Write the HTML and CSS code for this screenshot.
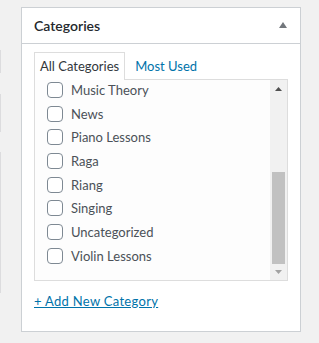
FILE: index.html
```html
<!DOCTYPE html>
<html>
<head>
<meta charset="utf-8">
<link rel="stylesheet" href="styles.css">
</head>
<body>
<div class="edge">
  <div class="seg seg1"></div>
  <div class="seg seg2"></div>
  <div class="seg seg3"></div>
</div>

<div class="postbox">
  <div class="hndle">
    <h2>Categories</h2>
    <svg class="toggle" width="8" height="6" viewBox="0 0 8 6"><polygon points="4,0 8,6 0,6" fill="#72777c"/></svg>
  </div>
  <div class="inside">
    <div class="tabs">
      <div class="tab active">All Categories</div>
      <div class="tab">Most Used</div>
    </div>
    <div class="panel">
      <div class="checklist">
        <label class="row"><span class="box"></span>Music Theory</label>
        <label class="row"><span class="box"></span>News</label>
        <label class="row"><span class="box"></span>Piano Lessons</label>
        <label class="row"><span class="box"></span>Raga</label>
        <label class="row"><span class="box"></span>Riang</label>
        <label class="row"><span class="box"></span>Singing</label>
        <label class="row"><span class="box"></span>Uncategorized</label>
        <label class="row"><span class="box"></span>Violin Lessons</label>
      </div>
      <div class="scrollbar">
        <div class="sbtn"><svg width="7" height="4" viewBox="0 0 7 4"><polygon points="3.5,0 7,4 0,4" fill="#505050"/></svg></div>
        <div class="track"><div class="thumb"></div></div>
        <div class="sbtn down"><svg width="7" height="4" viewBox="0 0 7 4"><polygon points="0,0 7,0 3.5,4" fill="#a3a3a3"/></svg></div>
      </div>
    </div>
    <a class="add" href="#">+ Add New Category</a>
  </div>
</div>
</body>
</html>
```
FILE: styles.css
```css
body {
  margin: 0;
  padding-top: 7px;
  background: #f1f1f1;
  display: flex;
  align-items: flex-start;
  font-family: Lato, "Liberation Sans", sans-serif;
  font-size: 13px;
  color: #444;
}

.edge {
  width: 2px;
  display: flex;
  flex-direction: column;
}

.seg {
  width: 1px;
  background: #dcdcde;
}
.seg1 { margin-top: 43px; height: 23px; }
.seg2 { margin-top: 21px; height: 38px; }
.seg3 { margin-top: 20px; height: 141px; }

.postbox {
  margin-left: 19px;
  width: 280px;
  height: 325px;
  box-sizing: border-box;
  background: #fff;
  border: 1px solid #ccd0d4;
}

.hndle {
  height: 35px;
  border-bottom: 1px solid #ccd0d4;
  display: flex;
  align-items: center;
  justify-content: space-between;
  padding: 0 13px 0 12px;
}

.hndle h2 {
  margin: 0;
  font-size: 14px;
  font-weight: 600;
  color: #23282d;
}

.toggle {
  margin-top: -1px;
}

.inside {
  padding: 8px 12px 0 12px;
}

.tabs {
  display: flex;
  gap: 4px;
  margin-bottom: -1px;
}

.tab {
  height: 27px;
  line-height: 27px;
  padding: 0 5px;
  border: 1px solid transparent;
  border-bottom: 0;
  color: #0073aa;
}

.tab.active {
  color: #32373c;
  background: #fff;
  border-color: #dddddd;
  position: relative;
  z-index: 1;
}

.panel {
  height: 202px;
  box-sizing: border-box;
  border: 1px solid #dddddd;
  background: #fdfdfd;
  display: flex;
  overflow: hidden;
}

.checklist {
  flex: 1;
  margin-top: -2px;
  padding-left: 12px;
}

.row {
  height: 23.7px;
  display: flex;
  align-items: center;
  color: #4b5158;
}

.box {
  width: 16px;
  height: 16px;
  box-sizing: border-box;
  border: 1px solid #7e8993;
  border-radius: 4px;
  background: #fff;
  margin-right: 8px;
}

.scrollbar {
  width: 17px;
  background: #f1f1f1;
  display: flex;
  flex-direction: column;
}

.sbtn {
  height: 17px;
  display: flex;
  align-items: center;
  justify-content: center;
}

.sbtn.down {
  height: 16px;
}

.track {
  flex: 1;
  display: flex;
  flex-direction: column;
  justify-content: flex-end;
  padding: 0 2px;
}

.thumb {
  height: 92px;
  background: #c1c1c1;
}

.add {
  display: inline-block;
  margin-top: 12px;
  line-height: 16px;
  letter-spacing: 0.3px;
  color: #0073aa;
  text-decoration: underline;
}
```
